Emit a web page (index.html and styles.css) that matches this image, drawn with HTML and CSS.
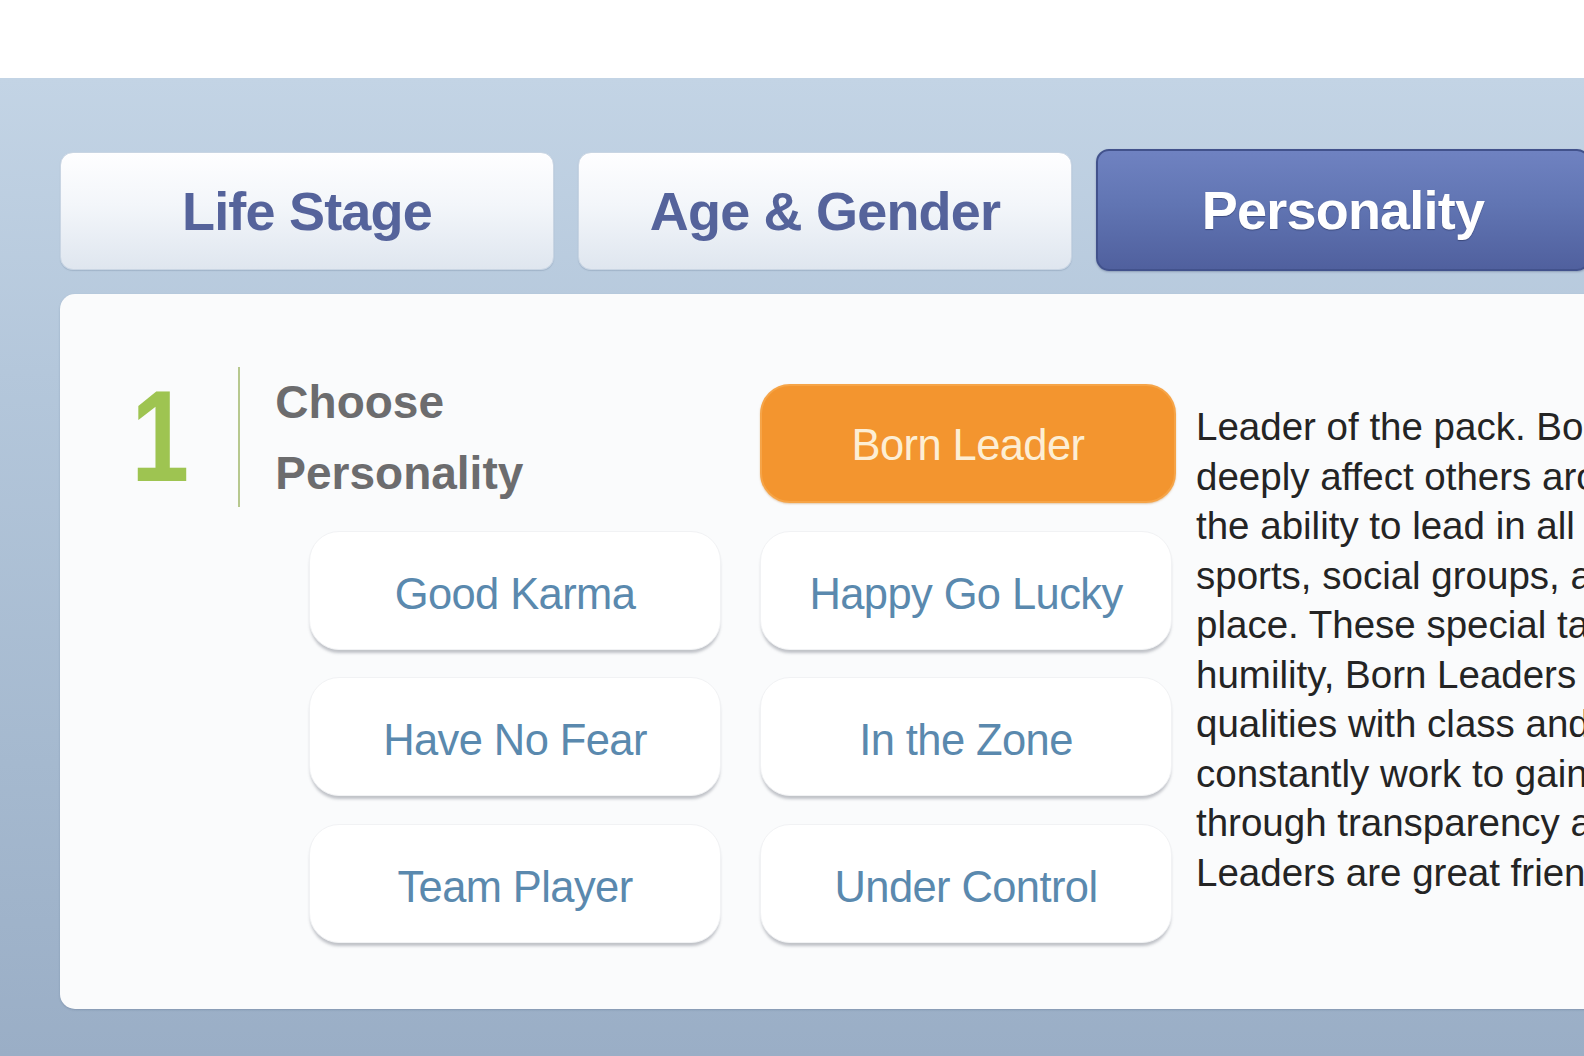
FILE: index.html
```html
<!DOCTYPE html>
<html lang="en">
<head>
<meta charset="utf-8">
<title>Choose Personality</title>
<link rel="stylesheet" href="styles.css">
</head>
<body>
<div class="topbar"></div>
<main class="stage">
  <nav class="tabs">
    <div class="tab">Life Stage</div>
    <div class="tab">Age &amp; Gender</div>
    <div class="tab tab-active">Personality</div>
  </nav>
  <section class="card">
    <div class="step">
      <span class="step-num">1</span>
      <span class="step-rule"></span>
      <h2 class="step-title">Choose<br>Personality</h2>
    </div>
    <button class="pill pill-selected c2 r1">Born Leader</button>
    <button class="pill c1 r2">Good Karma</button>
    <button class="pill c2 r2">Happy Go Lucky</button>
    <button class="pill c1 r3">Have No Fear</button>
    <button class="pill c2 r3">In the Zone</button>
    <button class="pill c1 r4">Team Player</button>
    <button class="pill c2 r4">Under Control</button>
    <p class="desc">Leader of the pack. Born Leaders have the<br>deeply affect others around them, with<br>the ability to lead in all areas of life:<br>sports, social groups, and the work<br>place. These special talents come with<br>humility, Born Leaders carry these<br>qualities with class and grace. They<br>constantly work to gain the trust of others<br>through transparency and honesty. Born<br>Leaders are great friends and mentors.</p>
  </section>
</main>
</body>
</html>
```
FILE: styles.css
```css
html, body {
  margin: 0;
  padding: 0;
  background: #ffffff;
  overflow: hidden;
}
body {
  width: 1584px;
  height: 1056px;
  font-family: "Liberation Sans", Arial, Helvetica, sans-serif;
}
.topbar {
  height: 78px;
  background: #ffffff;
}
.stage {
  height: 978px;
  box-sizing: border-box;
  padding: 74px 0 0 60px;
  background: linear-gradient(to bottom, #c3d4e5 0%, #b4c7db 30%, #a5b9cf 70%, #9aaec6 100%);
  overflow: hidden;
}
.tabs {
  display: flex;
  gap: 24px;
  width: 1600px;
}
.tab {
  flex: 0 0 494px;
  height: 118px;
  box-sizing: border-box;
  border-radius: 13px;
  border: 1px solid #c9d5e3;
  background: linear-gradient(to bottom, #fefeff 0%, #f3f6fa 45%, #dfe6ef 100%);
  box-shadow: inset 0 1px 0 #ffffff, 0 1px 1px rgba(90,110,140,0.25);
  color: #55639b;
  font-weight: bold;
  font-size: 54px;
  letter-spacing: -0.8px;
  display: flex;
  align-items: center;
  justify-content: center;
}
.tab-active {
  height: 122px;
  margin-top: -3px;
  border: 2px solid #42528c;
  background: linear-gradient(to bottom, #6f82c1 0%, #6175b3 45%, #50609e 100%);
  color: #ffffff;
  text-shadow: 0 1px 1px rgba(30,40,80,0.5);
  box-shadow: 0 1px 2px rgba(40,50,90,0.3);
}
.card {
  margin-top: 23px;
  width: 1600px;
  height: 715px;
  box-sizing: border-box;
  border-radius: 15px;
  background: #fafbfc;
  box-shadow: 0 1px 2px rgba(60,80,110,0.25);
  padding: 90px 0 0 0;
  display: grid;
  grid-template-columns: 210px 412px 412px 1fr;
  grid-template-rows: repeat(4, 119px);
  column-gap: 39px;
  row-gap: 27.5px;
}
.step {
  grid-column: 1 / span 2;
  grid-row: 1;
  display: flex;
  align-items: flex-start;
  margin-top: -17px;
  padding-left: 64px;
}
.step-num {
  display: inline-block;
  font-weight: bold;
  font-size: 130px;
  line-height: 130px;
  color: #9ec451;
  margin-top: 4px;
  transform: scaleX(0.8);
  transform-origin: 50% 50%;
}
.step-rule {
  width: 2px;
  height: 140px;
  background: #b7c88f;
  margin-left: 42px;
}
.step-title {
  margin: 0 0 0 35px;
  font-size: 46px;
  line-height: 71px;
  font-weight: bold;
  color: #6c6c6e;
  white-space: nowrap;
}
.pill {
  font-family: "Liberation Sans", Arial, Helvetica, sans-serif;
  font-size: 43.5px;
  letter-spacing: -0.6px;
  color: #5a89ae;
  background: #ffffff;
  border: 1px solid #f1f2f4;
  border-radius: 30px;
  box-shadow: 0 4px 3px -1px rgba(120,125,135,0.45);
  padding: 8px 0 0 0;
  margin: 0;
  height: 119px;
  width: 412px;
  cursor: pointer;
}
.pill-selected {
  background: #f3952f;
  border: 2px solid #f6a447;
  color: #fdeed4;
  width: 416px;
  padding-top: 4px;
  box-shadow: 0 1px 2px rgba(180,110,30,0.35);
}
.c1 { grid-column: 2; }
.c2 { grid-column: 3; }
.r1 { grid-row: 1; }
.r2 { grid-row: 2; }
.r3 { grid-row: 3; }
.r4 { grid-row: 4; }
.desc {
  grid-column: 4;
  grid-row: 1 / span 4;
  margin: 18px 0 0 -15px;
  font-size: 38.5px;
  line-height: 49.5px;
  color: #242424;
  white-space: nowrap;
}
```
